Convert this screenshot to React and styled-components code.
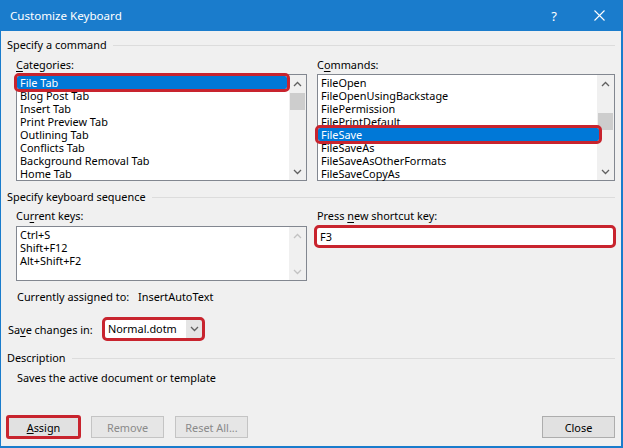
import React from "react"
import styled, { createGlobalStyle } from "styled-components"

const categories = [
  "File Tab",
  "Blog Post Tab",
  "Insert Tab",
  "Print Preview Tab",
  "Outlining Tab",
  "Conflicts Tab",
  "Background Removal Tab",
  "Home Tab",
]

const commands = [
  "FileOpen",
  "FileOpenUsingBackstage",
  "FilePermission",
  "FilePrintDefault",
  "FileSave",
  "FileSaveAs",
  "FileSaveAsOtherFormats",
  "FileSaveCopyAs",
]

const currentKeys = ["Ctrl+S", "Shift+F12", "Alt+Shift+F2"]

const Chevron = ({ up, color = "#606060" }) => (
  <svg width="9" height="6" viewBox="0 0 9 6">
    <path
      d={up ? "M1 5 L4.5 1.5 L8 5" : "M1 1 L4.5 4.5 L8 1"}
      fill="none"
      stroke={color}
      strokeWidth="1.3"
    />
  </svg>
)

const ScrollBar = ({ thumbTop, disabled }) => (
  <Scroll>
    <Arrow>
      <Chevron up color={disabled ? "#c2c2c2" : "#606060"} />
    </Arrow>
    <Track>
      {thumbTop !== undefined && <Thumb style={{ marginTop: thumbTop }} />}
    </Track>
    <Arrow>
      <Chevron color={disabled ? "#c2c2c2" : "#606060"} />
    </Arrow>
  </Scroll>
)

export default () => {
  return (
    <>
      <GlobalStyle />
      <Window>
        <TitleBar>
          <Title>Customize Keyboard</Title>
          <TitleButtons>
            <Help>?</Help>
            <svg width="11" height="11" viewBox="0 0 11 11">
              <path d="M0.5 0.5 L10.5 10.5 M10.5 0.5 L0.5 10.5" stroke="#fff" strokeWidth="1.1" />
            </svg>
          </TitleButtons>
        </TitleBar>
        <Body>
          <GroupHeader>Specify a command</GroupHeader>
          <Columns>
            <Column>
              <Label>
                <u>C</u>ategories:
              </Label>
              <ListBox $height={107}>
                <Items>
                  {categories.map((c, i) => (
                    <Row key={c} $selected={i === 0}>
                      {c}
                    </Row>
                  ))}
                </Items>
                <ScrollBar thumbTop={1} />
              </ListBox>
            </Column>
            <Column>
              <Label>
                C<u>o</u>mmands:
              </Label>
              <ListBox $height={107}>
                <Items $wide>
                  {commands.map((c, i) => (
                    <Row key={c} $selected={i === 4}>
                      {c}
                    </Row>
                  ))}
                </Items>
                <ScrollBar thumbTop={21} />
              </ListBox>
            </Column>
          </Columns>

          <GroupHeader $top={8}>Specify keyboard sequence</GroupHeader>
          <Columns $top={4}>
            <Column>
              <Label>
                Cu<u>r</u>rent keys:
              </Label>
              <ListBox $height={55} $top={3}>
                <Items>
                  {currentKeys.map((k) => (
                    <Row key={k}>{k}</Row>
                  ))}
                </Items>
                <ScrollBar disabled />
              </ListBox>
            </Column>
            <Column>
              <Label>
                Press <u>n</u>ew shortcut key:
              </Label>
              <ShortcutInput>F3</ShortcutInput>
            </Column>
          </Columns>

          <Assigned>
            <AssignedLabel>Currently assigned to:</AssignedLabel>
            <span>InsertAutoText</span>
          </Assigned>

          <SaveRow>
            <SaveLabel>
              Sa<u>v</u>e changes in:
            </SaveLabel>
            <Combo>
              <ComboText>Normal.dotm</ComboText>
              <ComboButton>
                <Chevron />
              </ComboButton>
            </Combo>
          </SaveRow>

          <GroupHeader $top={12}>Description</GroupHeader>
          <DescriptionText>Saves the active document or template</DescriptionText>

          <Footer>
            <Button $marked>
              <u>A</u>ssign
            </Button>
            <Button disabled>Remove</Button>
            <Button disabled>Reset All...</Button>
            <Spacer />
            <Button>Close</Button>
          </Footer>
        </Body>
      </Window>
    </>
  )
}

const GlobalStyle = createGlobalStyle`
  html, body {
    margin: 0;
    padding: 0;
    background: #f0f0f0;
  }
  body {
    font-family: "Noto Sans", "Open Sans", sans-serif;
    font-size: 10.9px;
    color: #000;
  }
`

const Window = styled.div`
  width: 623px;
  height: 448px;
  box-sizing: border-box;
  border-left: 1px solid #1a7ccc;
  border-right: 2px solid #1a7ccc;
  border-bottom: 2px solid #1a7ccc;
  background: #f0f0f0;
  display: flex;
  flex-direction: column;
`

const TitleBar = styled.div`
  height: 31px;
  flex-shrink: 0;
  margin-left: -1px;
  margin-right: -2px;
  background: #1a7ccc;
  display: flex;
  align-items: center;
  justify-content: space-between;
  padding: 0 18px 0 10px;
`

const Title = styled.span`
  color: #fff;
  font-size: 11.6px;
`

const TitleButtons = styled.div`
  display: flex;
  align-items: center;
  gap: 37px;
`

const Help = styled.span`
  color: #fff;
  font-size: 13px;
`

const Body = styled.div`
  flex: 1;
  display: flex;
  flex-direction: column;
  padding: 0 6px 8px 6px;
`

const GroupHeader = styled.div`
  margin-top: ${(p) => p.$top ?? 6}px;
  height: 16px;
  line-height: 16px;
  display: flex;
  align-items: center;
  gap: 6px;

  &::after {
    content: "";
    flex: 1;
    height: 1px;
    background: #dcdcdc;
  }
`

const Columns = styled.div`
  margin-top: ${(p) => p.$top ?? 5}px;
  padding-left: 9px;
  display: grid;
  grid-template-columns: 291px 298px;
  column-gap: 10px;
`

const Column = styled.div`
  display: flex;
  flex-direction: column;
`

const Label = styled.div`
  line-height: 14px;
  height: 14px;
  u {
    text-underline-offset: 2px;
  }
`

const ListBox = styled.div`
  margin-top: ${(p) => p.$top ?? 2}px;
  height: ${(p) => p.$height}px;
  box-sizing: border-box;
  border: 1px solid #828790;
  background: #fff;
  display: flex;
`

const Items = styled.div`
  flex: 1;
  padding-top: 1px;
  margin-right: ${(p) => (p.$wide ? -2 : 2)}px;
  position: relative;
  z-index: 1;
`

const Row = styled.div`
  height: 13px;
  line-height: 13px;
  padding-left: 3px;
  white-space: nowrap;
  position: relative;
  ${(p) =>
    p.$selected &&
    `
    background: #0078d7;
    color: #fff;
    outline: 3px solid #c8242e;
    border-radius: 2px;
    z-index: 1;
  `}
`

const Scroll = styled.div`
  width: 17px;
  background: #f0f0f0;
  display: flex;
  flex-direction: column;
`

const Arrow = styled.div`
  height: 17px;
  display: flex;
  align-items: center;
  justify-content: center;
`

const Track = styled.div`
  flex: 1;
  display: flex;
  flex-direction: column;
  align-items: center;
`

const Thumb = styled.div`
  width: 15px;
  height: 17px;
  background: #cdcdcd;
`

const ShortcutInput = styled.div`
  margin-top: 5px;
  margin-right: 2px;
  height: 17px;
  line-height: 17px;
  padding-left: 3px;
  background: #fff;
  outline: 3px solid #c8242e;
  border-radius: 2px;
`

const Assigned = styled.div`
  margin-top: 9px;
  padding-left: 10px;
  line-height: 14px;
  display: flex;
`

const AssignedLabel = styled.span`
  width: 121px;
`

const SaveRow = styled.div`
  margin-top: 16px;
  display: flex;
  align-items: center;
  u {
    text-underline-offset: 2px;
  }
`

const SaveLabel = styled.span`
  width: 97px;
  padding-left: 1px;
`

const Combo = styled.div`
  width: 97px;
  height: 18px;
  background: #fff;
  outline: 3px solid #c8242e;
  border-radius: 2px;
  display: flex;
`

const ComboText = styled.div`
  flex: 1;
  line-height: 18px;
  padding-left: 3px;
`

const ComboButton = styled.div`
  width: 16px;
  background: #e5e5e5;
  display: flex;
  align-items: center;
  justify-content: center;
`

const DescriptionText = styled.div`
  margin-top: 5px;
  padding-left: 10px;
  line-height: 14px;
`

const Footer = styled.div`
  margin-top: auto;
  display: flex;
  gap: 11px;
`

const Spacer = styled.div`
  flex: 1;
`

const Button = styled.button`
  width: 73px;
  height: 22px;
  padding: 0;
  font-family: inherit;
  font-size: 10.9px;
  color: #000;
  background: #e1e1e1;
  border: 1px solid #adadad;
  ${(p) =>
    p.$marked &&
    `
    outline: 3px solid #c8242e;
    outline-offset: -2px;
    border-radius: 2px;
  `}

  &:disabled {
    color: #8a8a8a;
    background: #e6e6e6;
    border-color: #c4c4c4;
  }
`
